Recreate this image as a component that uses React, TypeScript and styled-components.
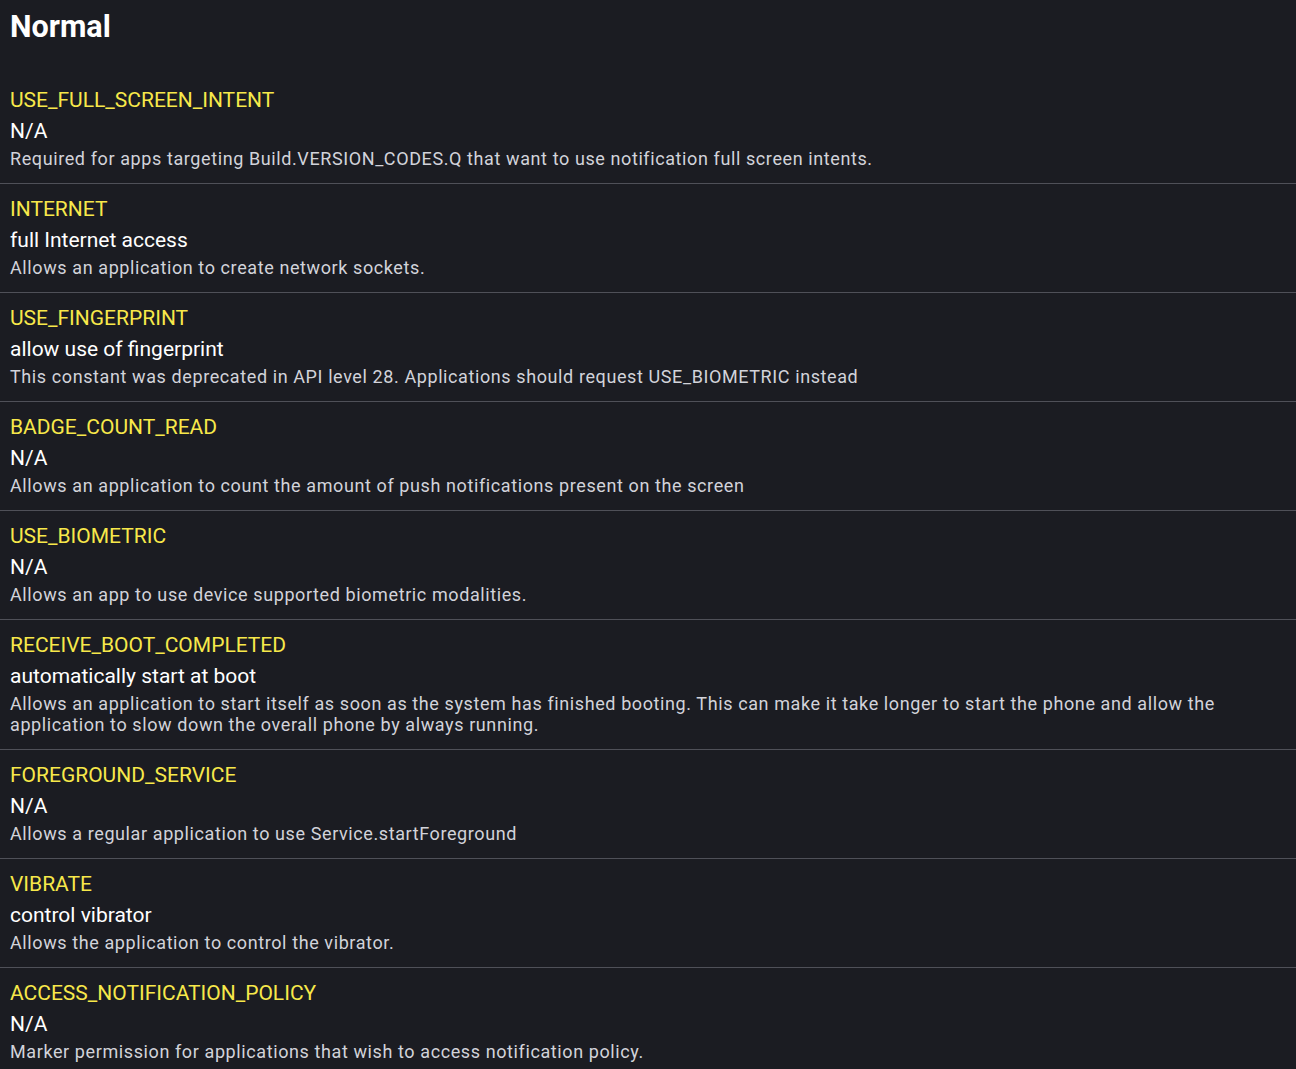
import React from "react";
import styled, { createGlobalStyle } from "styled-components";

const GlobalStyle = createGlobalStyle`
  html, body {
    margin: 0;
    padding: 0;
    background: #1b1c22;
  }
  body {
    font-family: Roboto, "Noto Sans", "Liberation Sans", sans-serif;
    -webkit-font-smoothing: antialiased;
  }
`;

const Page = styled.div`
  background: #1b1c22;
  min-height: 100vh;
`;

const Heading = styled.h1`
  margin: 0;
  padding: 0 10px;
  height: 75px;
  line-height: 53px;
  font-size: 30.5px;
  font-weight: 700;
  color: #ffffff;
`;

const List = styled.ul`
  list-style: none;
  margin: 0;
  padding: 0;
`;

const Item = styled.li`
  display: flex;
  flex-direction: column;
  padding: 12px 10px 14px;
  border-top: 1px solid #4f5058;
  &:first-child {
    border-top: none;
  }
`;

const Name = styled.div`
  font-size: 21px;
  line-height: 26px;
  color: #f7e84a;
`;

const Label = styled.div`
  margin-top: 5px;
  font-size: 21px;
  line-height: 26px;
  color: #ffffff;
`;

const Description = styled.div`
  margin-top: 4px;
  font-size: 18px;
  line-height: 21px;
  letter-spacing: 0.6px;
  color: #d2d3da;
`;

const permissions = [
  {
    name: "USE_FULL_SCREEN_INTENT",
    label: "N/A",
    desc: "Required for apps targeting Build.VERSION_CODES.Q that want to use notification full screen intents.",
  },
  {
    name: "INTERNET",
    label: "full Internet access",
    desc: "Allows an application to create network sockets.",
  },
  {
    name: "USE_FINGERPRINT",
    label: "allow use of fingerprint",
    desc: "This constant was deprecated in API level 28. Applications should request USE_BIOMETRIC instead",
  },
  {
    name: "BADGE_COUNT_READ",
    label: "N/A",
    desc: "Allows an application to count the amount of push notifications present on the screen",
  },
  {
    name: "USE_BIOMETRIC",
    label: "N/A",
    desc: "Allows an app to use device supported biometric modalities.",
  },
  {
    name: "RECEIVE_BOOT_COMPLETED",
    label: "automatically start at boot",
    desc: "Allows an application to start itself as soon as the system has finished booting. This can make it take longer to start the phone and allow the application to slow down the overall phone by always running.",
  },
  {
    name: "FOREGROUND_SERVICE",
    label: "N/A",
    desc: "Allows a regular application to use Service.startForeground",
  },
  {
    name: "VIBRATE",
    label: "control vibrator",
    desc: "Allows the application to control the vibrator.",
  },
  {
    name: "ACCESS_NOTIFICATION_POLICY",
    label: "N/A",
    desc: "Marker permission for applications that wish to access notification policy.",
  },
];

export default function App() {
  return (
    <>
      <GlobalStyle />
      <Page>
        <Heading>Normal</Heading>
        <List>
          {permissions.map((p) => (
            <Item key={p.name}>
              <Name>{p.name}</Name>
              <Label>{p.label}</Label>
              <Description>{p.desc}</Description>
            </Item>
          ))}
        </List>
      </Page>
    </>
  );
}
